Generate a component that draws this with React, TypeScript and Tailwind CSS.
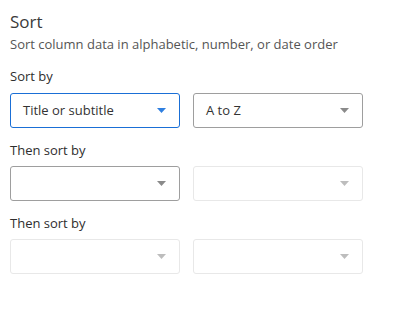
import React from 'react'

function Caret({ color }: { color: string }) {
  return (
    <svg width="9" height="5" viewBox="0 0 9 5" className="shrink-0">
      <path d="M0 0 L9 0 L4.5 5 Z" fill={color} />
    </svg>
  )
}

function Select({
  value,
  variant,
}: {
  value?: string
  variant: 'focused' | 'normal' | 'disabled'
}) {
  const border
    = variant === 'focused'
      ? 'border-[#1a6fd6]'
      : variant === 'normal'
        ? 'border-[#9e9e9e]'
        : 'border-[#e8e8e8]'
  const caret
    = variant === 'focused' ? '#2f7fe0' : variant === 'normal' ? '#8a8a8a' : '#bdbdbd'
  return (
    <div
      className={`flex h-[35px] w-[170px] items-center justify-between rounded-[3px] border ${border} pl-[12px] pr-[13px]`}
    >
      <span className="text-[13px] text-[#333]">{value}</span>
      <Caret color={caret} />
    </div>
  )
}

export default function App() {
  return (
    <div
      className="h-[316px] w-[417px] bg-white px-[10px] pt-[11px]"
      style={{ fontFamily: '"Open Sans", sans-serif' }}
    >
      <h2 className="text-[17px] leading-[22px] font-medium text-[#3a3a3a]">Sort</h2>
      <p className="mt-[2px] text-[13px] leading-[18px] text-[#555]">
        Sort column data in alphabetic, number, or date order
      </p>

      <div className="mt-[14px] text-[13px] leading-[18px] font-medium text-[#2e2e2e]">Sort by</div>
      <div className="mt-[8px] flex gap-[13px]">
        <Select value="Title or subtitle" variant="focused" />
        <Select value="A to Z" variant="normal" />
      </div>

      <div className="mt-[13px] text-[13px] leading-[18px] font-medium text-[#2e2e2e]">Then sort by</div>
      <div className="mt-[7px] flex gap-[13px]">
        <Select variant="normal" />
        <Select variant="disabled" />
      </div>

      <div className="mt-[13px] text-[13px] leading-[18px] font-medium text-[#2e2e2e]">Then sort by</div>
      <div className="mt-[7px] flex gap-[13px]">
        <Select variant="disabled" />
        <Select variant="disabled" />
      </div>
    </div>
  )
}
